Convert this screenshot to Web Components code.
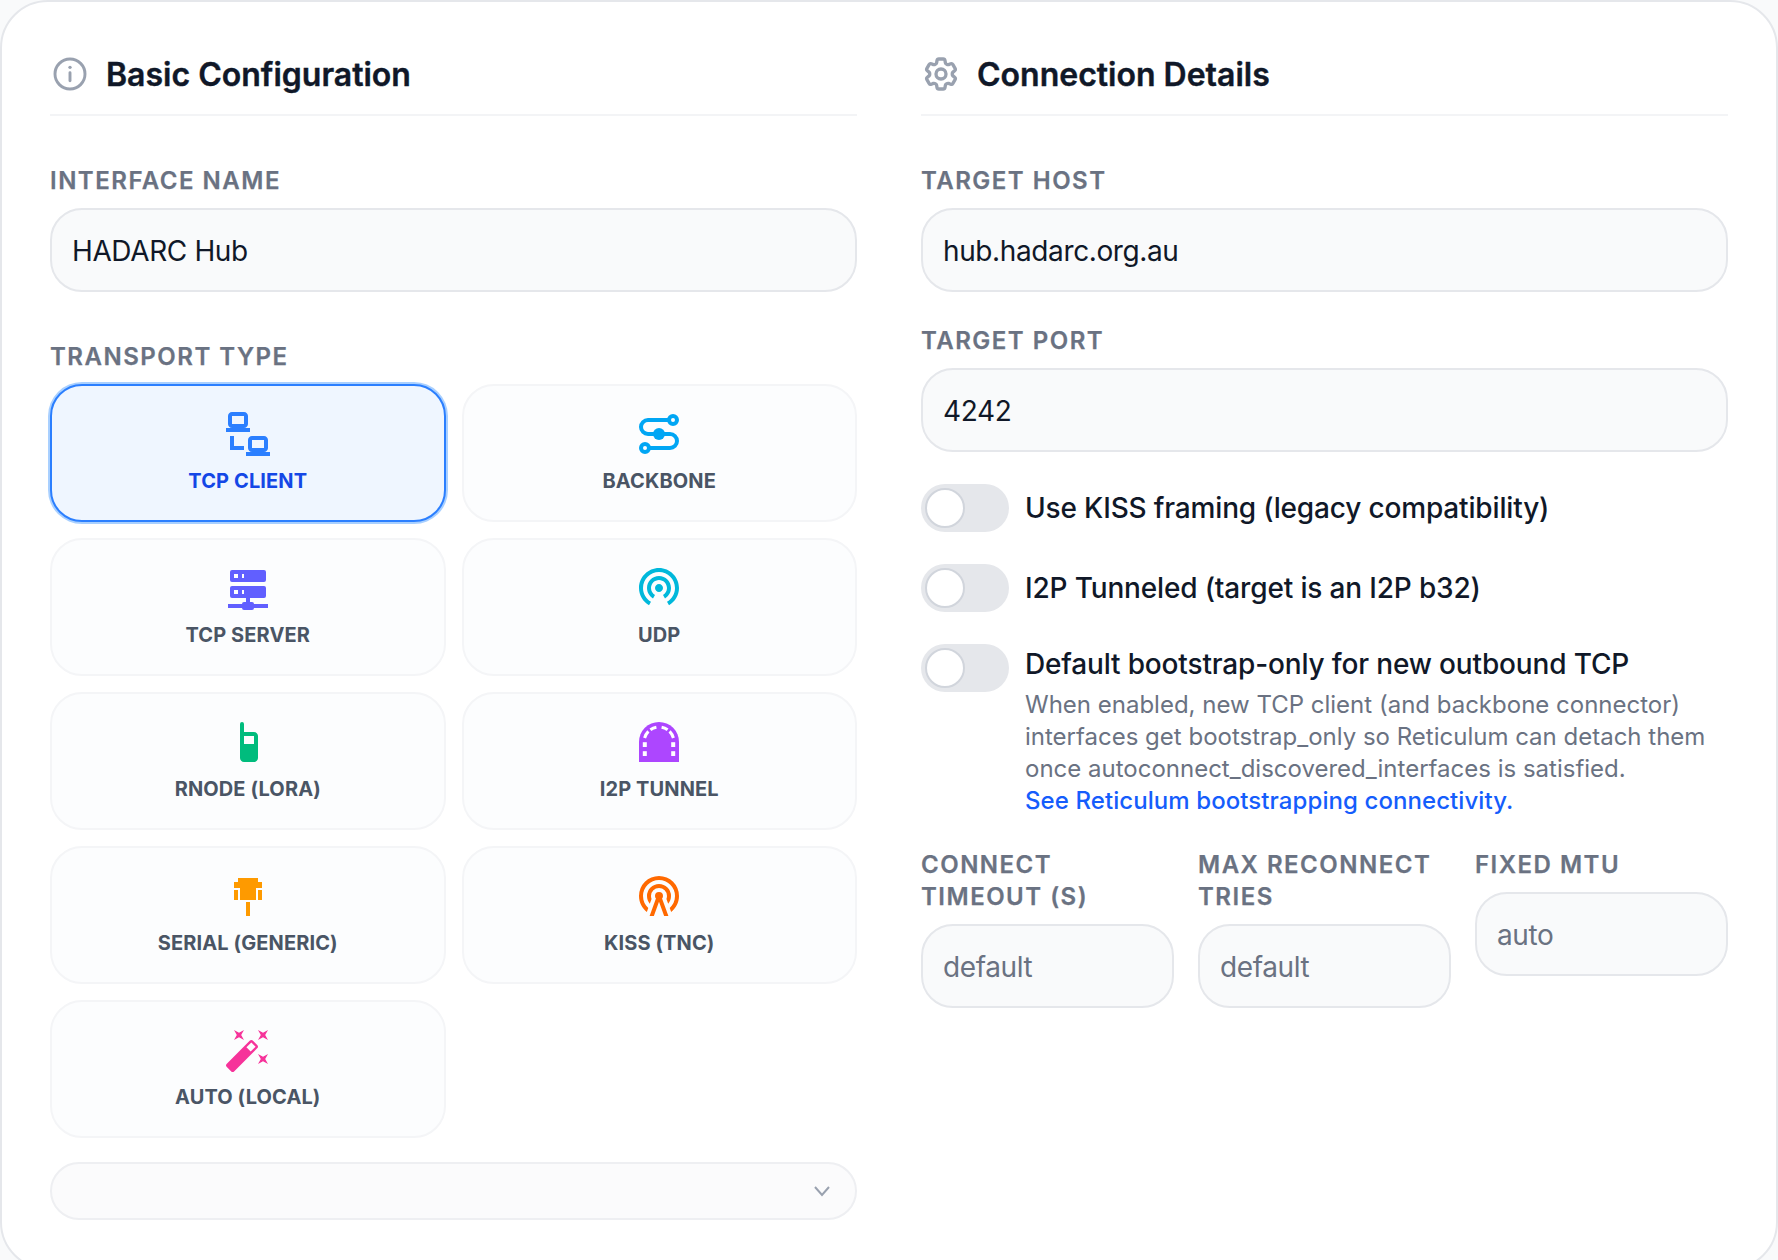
<!DOCTYPE html>
<html lang="en">
<head>
<meta charset="utf-8">
<title>Interface configuration</title>
<style>
  html, body { margin: 0; padding: 0; height: 1260px; overflow: hidden; background: #f9fafb; }
  body { font-family: Inter, "Liberation Sans", sans-serif; color: #101828; }
</style>
</head>
<body>
<x-card>
  <x-section slot="left" heading="Basic Configuration" icon="info">
    <x-field label="Interface Name"><x-input>HADARC Hub</x-input></x-field>
    <x-field label="Transport Type" class="transport">
      <x-tile-grid>
        <x-tile icon="lan" color="#2b7fff" selected>TCP Client</x-tile>
        <x-tile icon="backbone" color="#00a6f4">Backbone</x-tile>
        <x-tile icon="server" color="#615fff">TCP Server</x-tile>
        <x-tile icon="broadcast" color="#00b8db">UDP</x-tile>
        <x-tile icon="radio" color="#00bc7d">RNode (LoRa)</x-tile>
        <x-tile icon="tunnel" color="#ad46ff">I2P Tunnel</x-tile>
        <x-tile icon="serial" color="#fe9a00">Serial (Generic)</x-tile>
        <x-tile icon="tower" color="#ff6900">KISS (TNC)</x-tile>
        <x-tile icon="wand" color="#f6339a">Auto (Local)</x-tile>
      </x-tile-grid>
    </x-field>
    <x-select></x-select>
  </x-section>
  <x-section slot="right" heading="Connection Details" icon="cog">
    <x-field label="Target Host"><x-input>hub.hadarc.org.au</x-input></x-field>
    <x-field label="Target Port" gap="32"><x-input>4242</x-input></x-field>
    <x-toggle-list>
      <x-toggle>Use KISS framing (legacy compatibility)</x-toggle>
      <x-toggle>I2P Tunneled (target is an I2P b32)</x-toggle>
      <x-toggle top>Default bootstrap-only for new outbound TCP
        <span slot="desc">When enabled, new TCP client (and backbone connector) interfaces get bootstrap_only so Reticulum can detach them once autoconnect_discovered_interfaces is satisfied.<br><a href="#" style="color:#155dfc;font-weight:500;text-decoration:none;letter-spacing:.08px">See Reticulum bootstrapping connectivity.</a></span>
      </x-toggle>
    </x-toggle-list>
    <x-triple>
      <x-field label="Connect Timeout (s)"><x-input placeholder>default</x-input></x-field>
      <x-field label="Max Reconnect Tries"><x-input placeholder>default</x-input></x-field>
      <x-field label="Fixed MTU"><x-input placeholder>auto</x-input></x-field>
    </x-triple>
  </x-section>
</x-card>
<script>
const ICONS = {
  lan: '<path fill="currentColor" d="M4,1C2.89,1 2,1.89 2,3V7C2,8.11 2.89,9 4,9H1V11H13V9H10C11.11,9 12,8.11 12,7V3C12,1.89 11.11,1 10,1H4M4,3H10V7H4V3M3,13V18L3,20H10V18H5V13H3M14,13C12.89,13 12,13.89 12,15V19C12,20.11 12.89,21 14,21H11V23H23V21H20C21.11,21 22,20.11 22,19V15C22,13.89 21.11,13 20,13H14M14,15H20V19H14V15Z"/>',
  backbone: '<g fill="none" stroke="currentColor" stroke-width="2"><path d="M17 5H6.5a3.5 3.5 0 0 0 0 7h11a3.5 3.5 0 0 1 0 7H7"/><circle cx="19" cy="5" r="2"/><circle cx="5" cy="19" r="2"/></g><circle cx="12" cy="12" r="3" fill="currentColor"/>',
  server: '<path fill="currentColor" d="M13,19H14A1,1 0 0,1 15,20H22V22H15A1,1 0 0,1 14,23H10A1,1 0 0,1 9,22H2V20H9A1,1 0 0,1 10,19H11V17H4A1,1 0 0,1 3,16V12A1,1 0 0,1 4,11H20A1,1 0 0,1 21,12V16A1,1 0 0,1 20,17H13V19M4,3H20A1,1 0 0,1 21,4V8A1,1 0 0,1 20,9H4A1,1 0 0,1 3,8V4A1,1 0 0,1 4,3M9,7H10V5H9V7M9,15H10V13H9V15M5,5V7H7V5H5M5,13V15H7V13H5Z"/>',
  broadcast: '<path fill="currentColor" d="M12 10C10.9 10 10 10.9 10 12S10.9 14 12 14 14 13.1 14 12 13.1 10 12 10M18 12C18 8.7 15.3 6 12 6S6 8.7 6 12C6 14.2 7.2 16.1 9 17.2L10 15.5C8.8 14.8 8 13.5 8 12C8 9.8 9.8 8 12 8S16 9.8 16 12C16 13.5 15.2 14.8 14 15.5L15 17.2C16.8 16.1 18 14.2 18 12M12 2C6.5 2 2 6.5 2 12C2 15.7 4 18.9 7 20.6L8 18.9C5.6 17.5 4 14.9 4 12C4 7.6 7.6 4 12 4S20 7.6 20 12C20 15 18.4 17.5 16 18.9L17 20.6C20 18.9 22 15.7 22 12C22 6.5 17.5 2 12 2Z"/>',
  radio: '<path fill="currentColor" d="M9,2A1,1 0 0,0 8,3C8,8.67 8,14.33 8,20C8,21.11 8.89,22 10,22H15C16.11,22 17,21.11 17,20V9C17,7.89 16.11,7 15,7H10V3A1,1 0 0,0 9,2M10,9H15V13H10V9Z"/>',
  tunnel: '<path fill="currentColor" d="M2 22V12A10 10 0 0 1 22 12V22Z"/><g fill="none" stroke="#fff" stroke-width="1.5"><path d="M13.3 4.6A7.5 7.5 0 0 1 16.3 5.9"/><path d="M10.7 4.6A7.5 7.5 0 0 0 7.7 5.9"/><path d="M17.3 6.7A7.5 7.5 0 0 1 19.2 10"/><path d="M6.7 6.7A7.5 7.5 0 0 0 4.8 10"/></g><g fill="#fff"><rect x="3.9" y="12.1" width="2" height="2.4"/><rect x="3.9" y="16.6" width="2" height="2.4"/><rect x="18.1" y="12.1" width="2" height="2.4"/><rect x="18.1" y="16.6" width="2" height="2.4"/></g>',
  serial: '<path fill="currentColor" d="M7,3H17V5H19V8H16V14H8V8H5V5H7V3M17,9H19V14H17V9M11,15H13V22H11V15M5,9H7V14H5V9Z"/>',
  tower: '<path fill="currentColor" d="M12,10A2,2 0 0,1 14,12C14,12.5 13.82,12.94 13.53,13.29L16.7,22H14.57L12,14.93L9.43,22H7.3L10.47,13.29C10.18,12.94 10,12.5 10,12A2,2 0 0,1 12,10M12,8A4,4 0 0,0 8,12C8,12.5 8.1,13 8.28,13.46L7.4,15.86C6.53,14.81 6,13.47 6,12A6,6 0 0,1 12,6A6,6 0 0,1 18,12C18,13.47 17.47,14.81 16.6,15.86L15.72,13.46C15.9,13 16,12.5 16,12A4,4 0 0,0 12,8M12,4A8,8 0 0,0 4,12C4,14.36 5,16.5 6.64,17.94L5.92,19.94C3.54,18.11 2,15.23 2,12A10,10 0 0,1 12,2A10,10 0 0,1 22,12C22,15.23 20.46,18.11 18.08,19.94L17.36,17.94C19,16.5 20,14.36 20,12A8,8 0 0,0 12,4Z"/>',
  wand: '<path fill="currentColor" d="M7.5,5.6L5,7L6.4,4.5L5,2L7.5,3.4L10,2L8.6,4.5L10,7L7.5,5.6M19.5,15.4L22,14L20.6,16.5L22,19L19.5,17.6L17,19L18.4,16.5L17,14L19.5,15.4M22,2L20.6,4.5L22,7L19.5,5.6L17,7L18.4,4.5L17,2L19.5,3.4L22,2M13.34,12.78L15.78,10.34L13.66,8.22L11.22,10.66L13.34,12.78M14.37,7.29L16.71,9.63C17.1,10 17.1,10.65 16.71,11.04L5.04,22.71C4.65,23.1 4,23.1 3.63,22.71L1.29,20.37C0.9,20 0.9,19.35 1.29,18.96L12.96,7.29C13.35,6.9 14,6.9 14.37,7.29Z"/>',
  info: '<g fill="none" stroke="currentColor" stroke-width="1.75" stroke-linecap="round"><circle cx="12" cy="12" r="9"/><path d="M12 11.2V16"/><path d="M12 8h.01" stroke-width="2"/></g>',
  cog: '<g fill="none" stroke="currentColor" stroke-width="2" stroke-linejoin="round"><path d="M9.594 3.94c.09-.542.56-.94 1.11-.94h2.593c.55 0 1.02.398 1.11.94l.213 1.281c.063.374.313.686.645.87.074.04.147.083.22.127.325.196.72.257 1.075.124l1.217-.456a1.125 1.125 0 0 1 1.37.49l1.296 2.247a1.125 1.125 0 0 1-.26 1.431l-1.003.827c-.293.241-.438.613-.43.992a7.723 7.723 0 0 1 0 .255c-.008.378.137.75.43.991l1.004.827c.424.35.534.955.26 1.43l-1.298 2.247a1.125 1.125 0 0 1-1.369.491l-1.217-.456c-.355-.133-.75-.072-1.076.124a6.47 6.47 0 0 1-.22.128c-.331.183-.581.495-.644.869l-.213 1.281c-.09.543-.56.94-1.11.94h-2.594c-.55 0-1.019-.398-1.11-.94l-.213-1.281c-.062-.374-.312-.686-.644-.87a6.52 6.52 0 0 1-.22-.127c-.325-.196-.72-.257-1.076-.124l-1.217.456a1.125 1.125 0 0 1-1.369-.49l-1.297-2.247a1.125 1.125 0 0 1 .26-1.431l1.004-.827c.292-.24.437-.613.43-.991a6.932 6.932 0 0 1 0-.255c.007-.38-.138-.751-.43-.992l-1.004-.827a1.125 1.125 0 0 1-.26-1.43l1.297-2.247a1.125 1.125 0 0 1 1.37-.491l1.216.456c.356.133.751.072 1.076-.124.072-.044.146-.086.22-.128.332-.183.582-.495.644-.869l.214-1.28Z"/><path d="M15 12a3 3 0 1 1-6 0 3 3 0 0 1 6 0Z"/></g>'
};

function def(name, css, html, setup) {
  customElements.define(name, class extends HTMLElement {
    constructor() {
      super();
      const root = this.attachShadow({ mode: 'open' });
      root.innerHTML = '<style>' + css + '</style>' + (typeof html === 'function' ? html(this) : html);
    }
    connectedCallback() {
      if (setup) setup(this, this.shadowRoot);
    }
  });
}

def('x-card', `
  :host { display: block; box-sizing: border-box; width: 1778px; background: #fff;
    border: 2px solid #e5e7eb; border-radius: 48px; padding: 48px; }
  .cols { display: grid; grid-template-columns: 807px 807px; column-gap: 64px; }
`, '<div class="cols"><slot name="left"></slot><slot name="right"></slot></div>');

def('x-section', `
  :host { display: flex; flex-direction: column; min-width: 0; }
  header { display: flex; align-items: center; gap: 16px; height: 48px; padding-bottom: 16px;
    border-bottom: 2px solid #f3f4f6; margin-bottom: 48px; }
  svg { width: 40px; height: 40px; color: #99a1af; flex: none; }
  h2 { margin: 0; padding-top: 2px; font: 600 32px/46px Inter, sans-serif; color: #101828;
    -webkit-text-stroke: .4px #101828; }
`, el => `<header><svg viewBox="0 0 24 24">${ICONS[el.getAttribute('icon')]}</svg><h2>${el.getAttribute('heading')}</h2></header><slot></slot>`);

def('x-field', `
  :host { display: block; }
  :host(.transport) { margin-top: 48px; }
  :host([gap]) { margin-top: 32px; }
  label { display: block; padding-top: 1px; font: 600 24px/32px Inter, sans-serif; letter-spacing: 1.5px; text-transform: uppercase;
    color: #6a7282; margin-bottom: 11px; -webkit-text-stroke: .25px #6a7282; }
`, el => `<label>${el.getAttribute('label')}</label><slot></slot>`);

def('x-input', `
  :host { display: flex; align-items: center; box-sizing: border-box; height: 84px; padding: 1px 20px 0;
    background: #f9fafb; border: 2px solid #e5e7eb; border-radius: 32px;
    font: 400 28px/40px Inter, sans-serif; letter-spacing: -.38px; color: #101828; }
  :host([placeholder]) { color: #6a7282; }
`, '<slot></slot>');

def('x-tile-grid', `
  :host { display: grid; grid-template-columns: 1fr 1fr; gap: 16px; }
`, '<slot></slot>');

def('x-tile', `
  :host { display: flex; flex-direction: column; align-items: center; box-sizing: border-box; height: 138px;
    padding: 24px 8px; background: #fcfdfe; border: 2px solid #f4f5f7; border-radius: 32px;
    font: 700 20px/30px Inter, sans-serif; letter-spacing: .12px; text-transform: uppercase; color: #4a5565; }
  :host([selected]) { background: #eff6ff; border-color: #2b7fff; color: #1447e6; box-shadow: 0 0 0 2px #a9d0ff; }
  svg { width: 48px; height: 48px; margin-bottom: 8px; flex: none; }
`, el => `<svg viewBox="0 0 24 24" style="color:${el.getAttribute('color')}">${ICONS[el.getAttribute('icon')]}</svg><slot></slot>`);

def('x-select', `
  :host { display: flex; align-items: center; justify-content: flex-end; box-sizing: border-box; height: 58px;
    margin-top: 24px; padding-right: 24px; background: #fbfbfc; border: 2px solid #eeeff2; border-radius: 29px; }
  svg { width: 18px; height: 12px; display: block; }
`, '<svg viewBox="0 0 18 12"><path d="M2 2l7 8 7-8" fill="none" stroke="#99a1af" stroke-width="2"/></svg>');

def('x-toggle-list', `
  :host { display: flex; flex-direction: column; gap: 32px; margin-top: 32px; }
`, '<slot></slot>');

def('x-toggle', `
  :host { display: flex; align-items: center; gap: 16px; }
  :host([top]) { align-items: flex-start; }
  .track { position: relative; flex: none; width: 88px; height: 48px; border-radius: 24px; background: #e5e7eb; }
  .knob { position: absolute; left: 4px; top: 4px; width: 40px; height: 40px; box-sizing: border-box;
    background: #fff; border: 2px solid #d1d5dc; border-radius: 50%; }
  .title { font: 500 28px/40px Inter, sans-serif; letter-spacing: -.16px; color: #101828; }
  .desc { display: block; margin: 5px 0 -1px; font: 400 24px/32px Inter, sans-serif; color: #6a7282; }
  .body { min-width: 0; }
`, `<div class="track"><div class="knob"></div></div><div class="body"><div class="title"><slot></slot></div><div class="desc"><slot name="desc"></slot></div></div>`,
(el, root) => { if (!el.hasAttribute('top')) root.querySelector('.desc').style.display = 'none'; });

def('x-triple', `
  :host { display: grid; grid-template-columns: repeat(3, 1fr); column-gap: 24px; align-items: start; margin-top: 32px; }
`, '<slot></slot>');
</script>
</body>
</html>
